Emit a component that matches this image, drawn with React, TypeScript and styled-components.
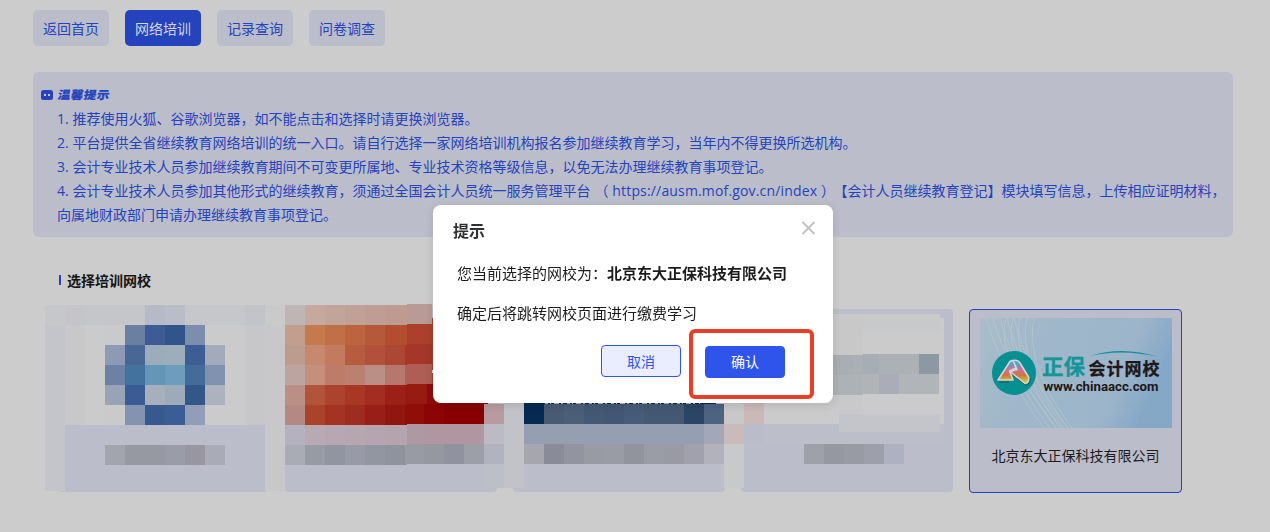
import React from "react";
import styled, { createGlobalStyle, css } from "styled-components";

const blue = "#2543bc";
const panel = "#bbbdcb";

const GlobalStyle = createGlobalStyle`
  * { box-sizing: border-box; }
  body {
    margin: 0;
    background: #ccc;
    overflow: hidden;
    font-family: "Open Sans", "Noto Sans CJK SC", sans-serif;
    font-size: 14px;
    color: #1c1c1c;
  }
`;

const Page = styled.main`
  width: 1270px;
  height: 532px;
  padding: 10px 37px 0 33px;
  overflow: hidden;
`;

const Nav = styled.nav`
  display: flex;
  gap: 16px;
`;

const NavButton = styled.button<{ $active?: boolean }>`
  width: 76px;
  height: 36px;
  padding: 2px 0 0;
  border: 0;
  border-radius: 5px;
  font: inherit;
  line-height: 34px;
  color: ${(p) => (p.$active ? "#d3d5df" : blue)};
  background: ${(p) => (p.$active ? blue : panel)};
`;

const Notice = styled.section`
  height: 165px;
  margin-top: 26px;
  padding: 11px 8px 0;
  border-radius: 6px;
  background: ${panel};
  color: ${blue};
  line-height: 24px;
`;

const NoticeTitle = styled.div`
  display: flex;
  align-items: center;
  gap: 5px;
  height: 24px;
  font-weight: 900;
`;

const TitleText = styled.span`
  font-size: 12.5px;
  letter-spacing: 0.5px;
  -webkit-text-stroke: 0.2px ${blue};
  transform: skewX(-10deg) scaleY(0.9);
`;

const NoticeList = styled.div`
  padding-left: 16px;
  white-space: nowrap;
`;

const Line = styled.div`
  height: 24px;
`;

const Num = styled.span`
  display: inline-block;
  width: 15.6px;
`;

const Address = styled.span`
  display: inline-block;
  width: 243px;
  height: 24px;
  vertical-align: top;
  letter-spacing: 0.16px;
`;

const SectionTitle = styled.h2`
  display: flex;
  align-items: center;
  gap: 6px;
  height: 24px;
  margin: 31px 0 0 26px;
  font-size: 14px;
  font-weight: 700;
  color: #151515;

  &::before {
    content: "";
    width: 2px;
    height: 10px;
    background: ${blue};
  }
`;

const Schools = styled.section`
  position: relative;
  display: flex;
  gap: 16px;
  margin: 17px 0 0 24px;
`;

const Card = styled.article<{ $selected?: boolean }>`
  flex: none;
  width: 212px;
  height: 183px;
  border-radius: 4px;
  background: ${panel};
  ${(p) =>
    p.$selected &&
    css`
      width: 213px;
      height: 184px;
      padding: 8px 10px 0;
      border: 1px solid ${blue};
    `}
`;

const SchoolName = styled.div`
  margin-top: 16px;
  line-height: 24px;
  text-align: center;
`;

const Banner = styled.svg`
  display: block;
  width: 192px;
  height: 110px;
`;

const MosaicLayer = styled.svg`
  position: absolute;
  left: -17px;
  top: -9px;
  width: 930px;
  height: 200px;
`;

const Overlay = styled.div`
  position: fixed;
  inset: 0;
  display: flex;
  justify-content: center;
  align-items: flex-start;
  padding: 205px 4px 0 0;
`;

const Dialog = styled.div`
  width: 400px;
  height: 198px;
  padding: 14px 20px 0;
  border-radius: 8px;
  background: #fff;
  box-shadow: 0 2px 10px rgba(0, 0, 0, 0.12);
`;

const DialogHeader = styled.header`
  display: flex;
  justify-content: space-between;
  height: 34px;
  font-size: 16px;
  line-height: 24px;
  font-weight: 700;
  color: #303133;

  svg {
    margin: 1px -3px 0 0;
  }
`;

const DialogBody = styled.div`
  padding-left: 4px;
  font-size: 15px;
  line-height: 40px;
  white-space: nowrap;

  p {
    margin: 0;
  }
`;

const DialogFooter = styled.footer`
  display: flex;
  justify-content: flex-end;
  gap: 24px;
  padding: 12px 28px 0 0;
`;

const DialogButton = styled.button<{ $primary?: boolean }>`
  position: relative;
  width: 80px;
  height: 32px;
  padding: ${(p) => (p.$primary ? "0 0 1px" : "1px 0 0")};
  margin-top: ${(p) => (p.$primary ? "1px" : "0")};
  border: 1px solid #2f54eb;
  border-radius: 4px;
  font: inherit;
  line-height: 29px;
  color: ${(p) => (p.$primary ? "#fff" : "#2f54eb")};
  background: ${(p) => (p.$primary ? "#2f54eb" : "#eaedfe")};
`;

const Highlight = styled.span`
  position: absolute;
  inset: -18px -30px -22px -17px;
  border: 4px solid #eb3e27;
  border-radius: 6px;
`;

type Block = [x: number, y: number, w: number, h: number, fill: string];

const row = (x: number, y: number, colors: string, w = 20, h = 20): Block[] =>
  colors.split(" ").map((c, i) => [x + i * w, y, w, h, "#" + c]);

const blocks: Block[] = [
  [45, 305, 20, 186, "#c4c5cb"],
  [65, 305, 200, 120, "#cbcbcb"],
  [265, 305, 20, 186, "#c8c8ca"],
  [65, 325, 20, 100, "#c8c8c9"],
  [245, 325, 20, 100, "#c7c7ca"],
  ...row(45, 305, "c6c7ca c4c4c9 c5c6c9 c5c6c9 c5c6c9 b6bac6 b8bdc8 c6c7cb c6c7cb c6c7cb c3c4ca cacacb"),
  ...row(105, 325, "c9cacb 6a7fa2 3c5c93 31558b 7d8dad"),
  ...row(105, 345, "8c9ab4 496795 9bacba 9dadba 3c5e94 a3abba"),
  ...row(105, 365, "6c81a4 44729f 6397b7 6d9cbc 456c99 8092b0"),
  ...row(105, 385, "98a3b6 3b5b94 a6afbb 9daaba 325788 adb2bf"),
  ...row(105, 405, "cacaca 8494b0 36598e 3b5c94 929eb8"),
  [65, 425, 200, 20, "#bbbeca"],
  ...row(105, 445, "a2a5ac 9699a1 9699a1 9a9ca8 9896a0 a9abb7"),

  ...row(285, 305, "c0b5b5 c5a99e c3a499 c0a197 c09d94 be9b91"),
  ...row(285, 325, "c19e8d c57a4c c06f46 bc6340 b6583a b24d30"),
  ...row(285, 345, "bd9b8f c4896f c27b5e b75c3f b2513b ab4733"),
  ...row(285, 365, "bca5a1 c3907a bd7c69 bb8070 bb8f85 b6776e"),
  ...row(285, 385, "b98f86 b2543a ad432f a83824 a22d20 9b2018"),
  ...row(285, 405, "b58983 ab422a a53324 9f2d1f 981e17 921610"),
  ...row(285, 425, "b5b2bf b9a9b3 b5a8b2 b5a6b0 b5a5b0 b3a4ad"),
  ...row(285, 445, "a9abb5 979ba4 9195a0 989ba7 9296a0 8f939d"),
  [405, 305, 2, 20, "#be9b91"],
  [405, 325, 2, 20, "#b24d30"],
  [405, 345, 2, 20, "#a53628"],
  [405, 365, 2, 20, "#af5d55"],
  [405, 385, 2, 20, "#971a13"],
  [405, 405, 2, 20, "#900e08"],
  [405, 425, 2, 20, "#b3a4ad"],
  [405, 445, 2, 20, "#989ba4"],
  [407, 304, 25, 20, "#b89b95"],
  [407, 324, 25, 20, "#ac412b"],
  [407, 344, 25, 20, "#a53628"],
  [407, 364, 25, 20, "#af5d55"],
  [432, 318, 1, 86, "#a93d2e"],
  [432, 370, 1, 3, "#dadada"],
  [407, 384, 20, 20, "#971a13"],
  [427, 384, 20, 20, "#900c0a"],
  [447, 400, 41, 4, "#890000"],
  [407, 404, 17, 20, "#900e08"],
  [424, 404, 20, 20, "#8b0505"],
  [444, 404, 40, 20, "#890000"],
  [407, 424, 17, 20, "#ae98a2"],
  [424, 424, 60, 20, "#b096a1"],
  [407, 444, 17, 20, "#989ba4"],
  ...row(424, 444, "9598a1 9092a0 9c9ea8"),
  [484, 404, 20, 20, "#b89a9f"],
  [484, 424, 20, 20, "#bcbac2"],
  [484, 444, 20, 20, "#b1b4bf"],
  [484, 464, 20, 24, "#bcbfc7"],
  [504, 400, 20, 88, "#c2c3c8"],

  [524, 400, 192, 4, "#052b52"],
  ...row(524, 404, "052b52 485b73 4b5f78 445973 425773 475c78 445973 445973 2b4565 4d6381 c8c8c9 cbb8b8"),
  [524, 424, 180, 20, "#969eb1"],
  [704, 424, 20, 20, "#a3a8b8"],
  ...row(524, 444, "a5a6ae 8a8b98 9295a0 999ba4 9a9ca5 91949d 9a9da6 999ba4 a0a1ac b2b2bd"),
  [724, 444, 20, 44, "#c8c9ca"],

  [764, 314, 180, 110, "#cbcbcb"],
  [724, 424, 20, 20, "#cbbaba"],
  [744, 424, 200, 20, "#bcbeca"],
  [744, 424, 20, 20, "#babdc9"],
  [839, 314, 101, 20, "#c8c9ca"],
  [940, 314, 4, 4, panel],
  [833, 315, 30, 40, "#c8c8c9"],
  [833, 395, 30, 20, "#c9c9ca"],
  [833, 355, 20, 20, "#a8aeb3"],
  [853, 355, 10, 20, "#aab0b4"],
  [863, 354, 16, 20, "#a6adb5"],
  [879, 354, 40, 20, "#abb1b5"],
  [919, 354, 20, 20, "#8d98a3"],
  [833, 375, 30, 20, "#adb2b6"],
  [863, 374, 16, 20, "#b0b3b7"],
  [879, 374, 20, 20, "#aaadb8"],
  [899, 374, 40, 20, "#b1b4b9"],
  [839, 414, 101, 18, "#c4c5cb"],
  ...row(804, 444, "9fa1aa 9598a1 989ba4 9d9faa aeb2c0"),
];

const Mosaic = () => (
  <MosaicLayer viewBox="40 300 930 200" shapeRendering="crispEdges" aria-hidden="true">
    {blocks.map(([x, y, w, h, fill], i) => (
      <rect key={i} x={x} y={y} width={w} height={h} fill={fill} />
    ))}
    <path d="M545 403.5H700" stroke="#a9b3bf" strokeDasharray="3 2 1 3 5 2 2 4" />
  </MosaicLayer>
);

const SchoolBanner = () => (
  <Banner viewBox="0 0 192 110">
    <defs>
      <linearGradient id="sky" x1="0" y1="0" x2="1" y2="0.25">
        <stop offset="0" stopColor="#a9bcc8" />
        <stop offset="0.4" stopColor="#9fb7ca" />
        <stop offset="0.8" stopColor="#9db5ca" />
        <stop offset="1" stopColor="#86a8c7" />
      </linearGradient>
      <linearGradient id="rainbow" gradientUnits="userSpaceOnUse" x1="0" y1="43" x2="0" y2="65">
        <stop offset="0.15" stopColor="#5f9dc4" />
        <stop offset="0.4" stopColor="#cf6d9a" />
        <stop offset="0.65" stopColor="#d2743f" />
        <stop offset="0.9" stopColor="#cfc22f" />
      </linearGradient>
    </defs>
    <rect width="192" height="110" fill="url(#sky)" />
    <g fill="none" stroke="#c5d0d1" strokeWidth="0.8" opacity="0.55">
      {[0, 1, 2, 3, 4].map((i) => (
        <path key={i} d={`M${6 + i * 7} 0C${14 + i * 7} 30 ${38 + i * 5} 76 ${64 + i * 6} 110`} />
      ))}
      {[0, 1, 2, 3, 4].map((i) => (
        <path key={i} d={`M${26 + i * 7} 0C${14 + i * 8} 40 ${58 + i * 3} 80 ${76 + i * 4} 110`} />
      ))}
    </g>
    <circle cx="34" cy="55" r="22" fill="#069092" />
    <g stroke="#3a4a50" strokeWidth="1" fill="none">
      <path d="M19 64H29M31.500 56L46 67.500Q50.500 66 50 60" />
    </g>
    <g fill="url(#rainbow)" stroke="#d5d7d4" strokeWidth="1.600" strokeLinejoin="round">
      <path d="M18 62L30 43.500Q32 42 34 43L36 50L29.500 53L33 62Z" />
      <path d="M33 42.500Q38 41.500 40 45L48.500 59Q49.500 65 45 65.500L30 53.500L37 51.500Z" />
    </g>
    <path d="M110 38Q142 27.500 179 39Q142 30.500 110 38Z" fill="#109295" />
    <g fontFamily="'Noto Sans CJK SC', sans-serif">
      <text x="62" y="55.500" fontSize="21" fontWeight="700" textLength="43" lengthAdjust="spacingAndGlyphs" fill="#159598" stroke="#159598" strokeWidth="0.300">正保</text>
      <text x="108.500" y="56.500" fontSize="17" fontWeight="700" textLength="71" lengthAdjust="spacing" fill="#1d1718" stroke="#1d1718" strokeWidth="0.300">会计网校</text>
    </g>
    <text x="63.500" y="72.500" fontFamily="Roboto, sans-serif" fontWeight="700" fontSize="13" textLength="115" lengthAdjust="spacingAndGlyphs" fill="#1d1718">www.chinaacc.com</text>
  </Banner>
);

export default function App() {
  return (
    <>
      <GlobalStyle />
      <Page>
        <Nav>
          <NavButton>返回首页</NavButton>
          <NavButton $active>网络培训</NavButton>
          <NavButton>记录查询</NavButton>
          <NavButton>问卷调查</NavButton>
        </Nav>
        <Notice>
          <NoticeTitle>
            <svg width="12" height="10" viewBox="0 0 12 10">
              <rect width="12" height="10" rx="2.500" fill={blue} />
              <path d="M3 4h2v2H3zM7 4h2v2H7z" fill="#c5c9dc" />
            </svg>
            <TitleText>温馨提示</TitleText>
          </NoticeTitle>
          <NoticeList>
            <Line><Num>1.</Num>推荐使用火狐、谷歌浏览器，如不能点击和选择时请更换浏览器。</Line>
            <Line><Num>2.</Num>平台提供全省继续教育网络培训的统一入口。请自行选择一家网络培训机构报名参加继续教育学习，当年内不得更换所选机构。</Line>
            <Line><Num>3.</Num>会计专业技术人员参加继续教育期间不可变更所属地、专业技术资格等级信息，以免无法办理继续教育事项登记。</Line>
            <Line>
              <Num>4.</Num>会计专业技术人员参加其他形式的继续教育，须通过全国会计人员统一服务管理平台
              <Address>&nbsp;（ https://ausm.mof.gov.cn/index ）</Address>
              【会计人员继续教育登记】模块填写信息，上传相应证明材料，
            </Line>
            <Line>向属地财政部门申请办理继续教育事项登记。</Line>
          </NoticeList>
        </Notice>
        <SectionTitle>选择培训网校</SectionTitle>
        <Schools>
          <Card />
          <Card />
          <Card />
          <Card />
          <Card $selected>
            <SchoolBanner />
            <SchoolName>北京东大正保科技有限公司</SchoolName>
          </Card>
          <Mosaic />
        </Schools>
      </Page>
      <Overlay>
        <Dialog role="dialog">
          <DialogHeader>
            提示
            <svg width="15" height="15" viewBox="0 0 15 15">
              <path d="M1.500 2L13.500 14M13.500 2L1.500 14" stroke="#c2c2c2" strokeWidth="2" fill="none" />
            </svg>
          </DialogHeader>
          <DialogBody>
            <p>您当前选择的网校为：<b>北京东大正保科技有限公司</b></p>
            <p>确定后将跳转网校页面进行缴费学习</p>
          </DialogBody>
          <DialogFooter>
            <DialogButton>取消</DialogButton>
            <DialogButton $primary>
              确认
              <Highlight />
            </DialogButton>
          </DialogFooter>
        </Dialog>
      </Overlay>
    </>
  );
}
